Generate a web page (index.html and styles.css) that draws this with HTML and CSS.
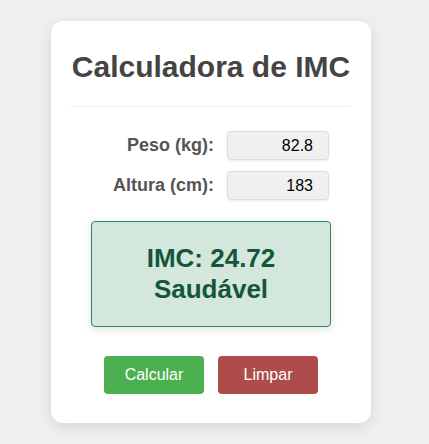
FILE: index.html
```html
<!DOCTYPE html>
<html lang="pt-BR">
<head>
  <meta charset="UTF-8">
  <meta name="viewport" content="width=device-width, initial-scale=1.0">
  <title>Calculadora de IMC</title>
  <link rel="stylesheet" href="styles.css">
</head>
<body>
  <div class="calculator">
    <h1>Calculadora de IMC</h1>

    <div class="field">
      <label for="peso">Peso (kg):</label>
      <input type="text" id="peso" value="82.8">
    </div>
    <div class="field">
      <label for="altura">Altura (cm):</label>
      <input type="text" id="altura" value="183">
    </div>

    <div id="result" class="result healthy">
      <span>IMC: 24.72</span>
      <span>Saudável</span>
    </div>

    <div class="actions">
      <button id="calcular" class="calc-btn">Calcular</button>
      <button id="limpar" class="clear-btn">Limpar</button>
    </div>
  </div>
</body>
</html>
```

FILE: styles.css
```css
body {
  font-family: Arial, "Liberation Sans", sans-serif;
  background-color: #efefef;
  margin: 0;
  padding: 21px 51px;
}
.calculator {
  width: 320px;
  box-sizing: border-box;
  background-color: #fff;
  border-radius: 12px;
  box-shadow: 0 4px 14px rgba(0, 0, 0, 0.1);
  padding: 29px 20px 29px;
}
h1 {
  margin: 0 0 24px;
  padding-bottom: 22px;
  border-bottom: 1px solid #eee;
  font-size: 30px;
  color: #444;
  text-align: center;
}
.field {
  display: grid;
  grid-template-columns: 1fr 102px;
  column-gap: 13px;
  align-items: center;
  margin-right: 22px;
  margin-bottom: 11px;
}
.field label {
  text-align: right;
  font-size: 18px;
  font-weight: bold;
  color: #555;
}
.field input {
  height: 29px;
  box-sizing: border-box;
  width: 102px;
  padding: 0 15px 0 8px;
  font-family: inherit;
  font-size: 16px;
  color: #000;
  text-align: right;
  background-color: #f0f0f0;
  border: 1px solid #ddd;
  border-radius: 4px;
  box-shadow: 0 1px 3px rgba(0, 0, 0, 0.08);
}
.result {
  width: 240px;
  box-sizing: border-box;
  margin: 21px auto 0;
  padding: 21px 10px;
  border-radius: 4px;
  font-size: 26px;
  line-height: 31px;
  font-weight: bold;
  text-align: center;
  box-shadow: 0 2px 8px rgba(0, 0, 0, 0.12);
}
.result span {
  display: block;
}
.healthy {
  background-color: #d3e7dd;
  border: 1px solid #2e8b57;
  color: #15563a;
}
.actions {
  display: flex;
  justify-content: center;
  gap: 14px;
  margin-top: 29px;
}
button {
  width: 100px;
  height: 38px;
  border: none;
  border-radius: 4px;
  color: white;
  font-family: inherit;
  font-size: 16px;
  cursor: pointer;
}
.calc-btn {
  background-color: #4caf50;
}
.clear-btn {
  background-color: #ae4b4b;
}
```
